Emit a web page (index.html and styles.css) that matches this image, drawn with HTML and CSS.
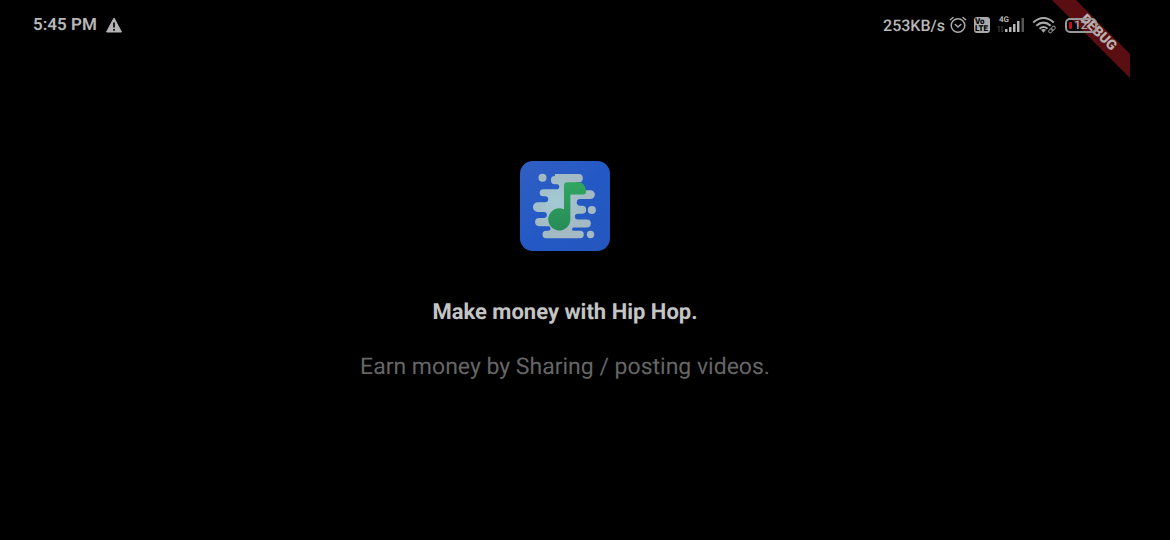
FILE: index.html
```html
<!DOCTYPE html>
<html lang="en">
<head>
<meta charset="utf-8">
<meta name="viewport" content="width=device-width, initial-scale=1">
<title>Hip Hop</title>
<link rel="stylesheet" href="styles.css">
</head>
<body>
<div class="screen">
  <header class="status-bar">
    <div class="status-group status-left">
      <span>5:45 PM</span>
      <svg class="warning" viewBox="0 0 16 16" aria-hidden="true">
        <path d="M8 1 15.500 15H.5Z" fill="#b4b4b4" stroke="#b4b4b4" stroke-linejoin="round"/>
        <path d="M8 5.500v5M8 12v1.700" stroke="#000" stroke-width="1.700"/>
      </svg>
    </div>
    <div class="status-group status-right">
      <span class="speed">253KB/s</span>
      <svg class="alarm" viewBox="0 0 18 18" fill="none" stroke="#aaa" stroke-width="1.500" stroke-linecap="round" aria-hidden="true">
        <circle cx="9" cy="9.500" r="6.800"/>
        <path d="M1.300 3.800 4 1.500M16.700 3.800 14 1.500M6.300 8.500 9 11l2.800-2.500"/>
      </svg>
      <span class="volte"><span>Vo</span><span>LTE</span></span>
      <svg class="signal" viewBox="0 0 28 18" aria-hidden="true">
        <text class="network" x="2" y="6">4G</text>
        <path d="M2 10v6M5 10v6M1 11.500 2 10M6 14.500 5 16" stroke="#444" fill="none"/>
        <path d="M8 13h2.500v3H8ZM12 11h2.500v5H12ZM16 8h2.500v8H16ZM20 5h2.500v11H20Z" fill="#b4b4b4"/>
        <path d="M24.500 2h2.500v14h-2.500Z" fill="#555"/>
      </svg>
      <svg class="wifi" viewBox="0 0 26 18" fill="none" aria-hidden="true">
        <path d="M1.200 6.500Q11.500-2.500 21.800 6.500M4.300 9.800q7.200-6.300 14.400 0M7.500 12.700q4-3.400 8 0" stroke="#aaa" stroke-width="2"/>
        <path d="m9 13.800 2.500 3 2.500-3q-2.500-1.800-5 0Z" fill="#aaa"/>
        <g transform="rotate(-45 20 13.500)" stroke="#888">
          <rect x="16" y="12" width="4.500" height="3" rx="1.500"/>
          <rect x="19.500" y="12" width="4.500" height="3" rx="1.500"/>
        </g>
      </svg>
      <span class="battery"><i class="charge"></i>12</span>
    </div>
  </header>

  <main class="intro">
    <svg class="logo" viewBox="32 32 268 268" role="img" aria-label="Hip Hop logo">
      <defs>
        <linearGradient id="tile" x1="0" y1="0" x2="1" y2="1">
          <stop offset="0" stop-color="#315fc3"/>
          <stop offset=".5" stop-color="#2459c5"/>
          <stop offset="1" stop-color="#2456bd"/>
        </linearGradient>
        <radialGradient id="cloud" gradientUnits="userSpaceOnUse" cx="140" cy="155" r="90">
          <stop offset="0" stop-color="#a2cbd5"/>
          <stop offset="1" stop-color="#a3b9c3"/>
        </radialGradient>
        <linearGradient id="note" x1="0" y1="0" x2="0" y2="1">
          <stop offset="0" stop-color="#30a660"/>
          <stop offset="1" stop-color="#278b58"/>
        </linearGradient>
      </defs>
      <rect x="32" y="32" width="268" height="268" rx="38" fill="url(#tile)"/>
      <g fill="url(#cloud)">
        <path d="M136 71H207a12 12 0 0 1 0 24H200V119H242a13 13 0 0 1 0 26H211a10 10 0 0 0 0 20H217a12 12 0 0 1 0 24H204a8 8 0 0 0 0 17H231a12 12 0 0 1 0 24H192a5 5 0 0 0 0 10H211a11 11 0 0 1 0 22H110a11 11 0 0 1 0-22H116a7 7 0 0 0 0-14H89a12 12 0 0 1 0-24H103a9 9 0 0 0 0-18H85a14 14 0 0 1 0-29H107a9 9 0 0 0 0-18H101a10 10 0 0 1 0-21H144a8 8 0 0 0 0-15H136a12 12 0 0 1 0-24Z"/>
        <circle cx="99" cy="82" r="12"/>
        <circle cx="246" cy="178" r="12"/>
        <circle cx="242" cy="251" r="11"/>
      </g>
      <path d="M163 105Q163 95 173 95H207Q225 95 229 121Q229 132 218 132H182V205A33 33 0 1 1 163 176Z" fill="url(#note)"/>
    </svg>
    <h1 class="title">Make money with Hip Hop.</h1>
    <p class="subtitle">Earn money by Sharing / posting videos.</p>
  </main>

  <svg class="debug-banner" viewBox="0 0 78 78" aria-label="Debug">
    <path class="ribbon" d="M0 0H24L78 54V78Z"/>
    <text class="debug-text" transform="translate(47 32) rotate(45)" x="0" y="5">DEBUG</text>
  </svg>
</div>
</body>
</html>
```
FILE: styles.css
```css
* {
  box-sizing: border-box;
}

body {
  margin: 0;
  background: #000;
  color: #b8b8b8;
  font-family: Roboto, "Liberation Sans", sans-serif;
  text-rendering: geometricPrecision;
}

.screen {
  position: relative;
  display: flex;
  flex-direction: column;
  min-height: 100vh;
  margin-right: 40px;
}

.status-bar {
  position: relative;
  z-index: 1;
  display: flex;
  justify-content: space-between;
  align-items: center;
  height: 50px;
  padding: 0 33px;
  font-weight: 500;
}

.status-group {
  display: flex;
  align-items: center;
}

.status-left {
  gap: 9px;
  font-size: 17px;
  font-weight: 600;
}

.status-right {
  gap: 7px;
  font-size: 16px;
}

.speed {
  margin-right: -3px;
}

.warning {
  width: 16px;
  height: 16px;
}

.alarm {
  width: 18px;
  height: 18px;
}

.volte {
  display: flex;
  flex-direction: column;
  justify-content: center;
  width: 16px;
  height: 16px;
  padding-left: 1px;
  border-radius: 3px;
  background: #aaa;
  color: #000;
  font-size: 8px;
  font-weight: 900;
  line-height: 7px;
}

.signal {
  width: 28px;
  height: 18px;
}

.network {
  fill: #b4b4b4;
  font-size: 8px;
  font-weight: 700;
}

.wifi {
  width: 26px;
  height: 18px;
}

.battery {
  position: relative;
  width: 32px;
  height: 15px;
  padding-left: 7px;
  border: 2px solid #999;
  border-radius: 5px;
  color: #aaa;
  font-size: 12px;
  line-height: 11px;
}

.charge {
  position: absolute;
  top: 2px;
  left: 2px;
  width: 3px;
  height: 7px;
  border-radius: 1px;
  background: #c80d18;
}

.intro {
  display: flex;
  flex: 1;
  flex-direction: column;
  align-items: center;
  justify-content: center;
  padding: 0 16px 48px;
  text-align: center;
}

.logo {
  width: 90px;
  height: 90px;
}

.title {
  margin: 47px 0 24px;
  color: #c4c4c4;
  font-size: 22px;
  font-weight: 700;
  line-height: 30px;
}

.subtitle {
  margin: 0;
  color: #666;
  font-size: 23px;
  line-height: 30px;
}

.debug-banner {
  position: absolute;
  top: 0;
  right: 0;
  width: 78px;
  height: 78px;
}

.ribbon {
  fill: #5a0e12;
}

.debug-text {
  fill: #b8b0b0;
  font-size: 14px;
  font-weight: 900;
  text-anchor: middle;
}
```
